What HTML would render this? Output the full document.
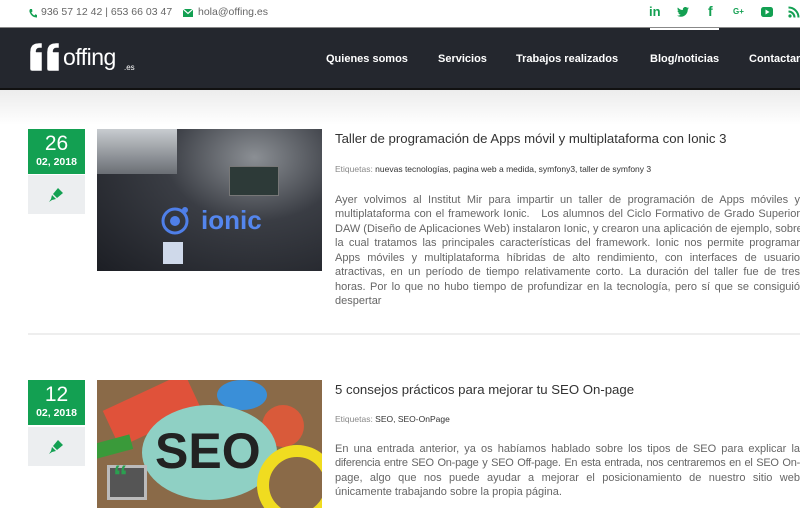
<!DOCTYPE html>
<html><head><meta charset="utf-8"><style>
*{margin:0;padding:0;box-sizing:border-box}
body{width:800px;height:508px;overflow:hidden;background:#fff;font-family:"Liberation Sans",sans-serif;position:relative}
.top{position:absolute;left:0;top:0;width:800px;height:28px;border-bottom:1px solid #888;background:#fff;font-size:10.5px;color:#666}
.nav{position:absolute;left:0;top:28px;width:800px;height:62px;background:#24272e;border-bottom:2px solid #111}
.nav a{position:absolute;top:25px;color:#fff;font-weight:bold;font-size:11px;text-decoration:none;white-space:nowrap}
.grad{position:absolute;left:0;top:90px;width:800px;height:35px;background:linear-gradient(#ececec,#fff)}
.date{position:absolute;left:28px;width:57px;height:45px;background:#13a052;color:#fff;text-align:center}
.date b{display:block;font-size:21px;font-weight:normal;line-height:24px;padding-top:3px}
.date i{display:block;font-style:normal;font-weight:bold;font-size:10.5px}
.pen{position:absolute;left:28px;width:57px;height:39px;background:#eceef0}
.pen svg{position:absolute;left:20px;top:12px}
.title{position:absolute;left:335px;font-size:13.2px;color:#333;white-space:nowrap}
.tags{position:absolute;left:335px;font-size:8.5px;color:#888;white-space:nowrap}
.tags span{color:#333}
.body{position:absolute;left:335px;width:465px;font-size:11px;line-height:14.45px;color:#666}
.body div{text-align:justify;text-align-last:justify;white-space:nowrap;height:14.45px}
.body div.l{text-align-last:left}
.img{position:absolute;left:97px;width:225px}
</style></head><body>
<div class="top">
<svg style="position:absolute;left:29px;top:9px" width="8" height="9" viewBox="0 0 8 9"><path d="M1 0 L3 0 L3.5 2.5 L2.3 3.3 Q3.5 5.8 5.5 6.5 L6.3 5.3 L8 6 L8 8.5 Q3 9 0.5 3 Q0.3 1 1 0Z" fill="#13a052"/></svg>
<span style="position:absolute;left:41px;top:6px">936 57 12 42 | 653 66 03 47</span>
<svg style="position:absolute;left:183px;top:9px" width="10" height="8"><rect width="10" height="8" fill="#13a052"/><path d="M0 0 L5 4.5 L10 0" stroke="#fff" stroke-width="1.2" fill="none"/></svg>
<span style="position:absolute;left:198px;top:6px">hola@offing.es</span>
<div style="position:absolute;left:649px;top:4px;color:#13a052;font-weight:bold;font-size:13px">in</div>
<svg style="position:absolute;left:677px;top:7px" width="12" height="10" viewBox="0 0 24 20"><path d="M24 2.4a10 10 0 0 1-2.8.8A5 5 0 0 0 23.3.4a10 10 0 0 1-3.1 1.2A4.9 4.9 0 0 0 11.8 6 14 14 0 0 1 1.7.9a4.9 4.9 0 0 0 1.5 6.6A4.9 4.9 0 0 1 1 6.9a4.9 4.9 0 0 0 3.900 4.8 5 5 0 0 1-2.2.1 4.9 4.9 0 0 0 4.6 3.4A9.9 9.9 0 0 1 0 17.3 14 14 0 0 0 7.5 19.5c9.1 0 14-7.5 14-14v-.6A10 10 0 0 0 24 2.4z" fill="#13a052"/></svg>
<div style="position:absolute;left:708px;top:3px;color:#13a052;font-weight:bold;font-size:14px">f</div>
<div style="position:absolute;left:733px;top:7px;color:#13a052;font-weight:bold;font-size:8px">G+</div>
<svg style="position:absolute;left:761px;top:7px" width="12" height="10"><rect width="12" height="10" rx="2.5" fill="#13a052"/><path d="M4.5 2.5 L8.5 5 L4.5 7.5Z" fill="#fff"/></svg>
<svg style="position:absolute;left:788px;top:6px" width="12" height="12"><circle cx="2" cy="10" r="1.6" fill="#13a052"/><path d="M0.5 5.5 A6 6 0 0 1 6.5 11.5 M0.5 1.5 A10 10 0 0 1 10.5 11.5" stroke="#13a052" stroke-width="2" fill="none"/></svg>
</div>
<div class="nav">
<svg style="position:absolute;left:28px;top:14px" width="36" height="30" viewBox="0 0 36 30"><path d="M2 10 Q2 1 11 1 L14 1 L14 6 L11 6 Q8 6 8 10 L14 10 L14 29 L4 29 Q2 29 2 27Z M19 10 Q19 1 28 1 L31 1 L31 6 L28 6 Q25 6 25 10 L31 10 L31 29 L21 29 Q19 29 19 27Z" fill="#fff" stroke="#24272e" stroke-width="0.5"/></svg>
<div style="position:absolute;left:63px;top:16px;color:#fff;font-size:23px;letter-spacing:-0.5px;font-weight:300">offing</div>
<div style="position:absolute;left:124px;top:35px;color:#fff;font-size:8px">.es</div>
<a style="left:326px">Quienes somos</a>
<a style="left:438px">Servicios</a>
<a style="left:516px">Trabajos realizados</a>
<a style="left:650px">Blog/noticias</a>
<div style="position:absolute;left:650px;top:0;width:69px;height:2px;background:#fff"></div>
<a style="left:749px">Contactar</a>
</div>
<div class="grad"></div>

<div class="date" style="top:129px"><b>26</b><i>02, 2018</i></div>
<div class="pen" style="top:175px"><svg width="16" height="16" viewBox="0 0 16 16"><path d="M10 1 L15 6 L9 11 L5 7Z M4 8 L8 12 L4 13 L1 15 L3 12Z" fill="#13a052"/></svg></div>
<div class="img" style="top:129px;height:142px;background:radial-gradient(ellipse at 70% 20%,#8b8f94 0%,#3a3d44 40%,#1c1e24 100%)">
<div style="position:absolute;left:0;top:0;width:80px;height:45px;background:linear-gradient(#c8ccd0,#6a6e74)"></div>
<div style="position:absolute;left:132px;top:37px;width:50px;height:30px;background:#2d3a38;border:1px solid #777"></div>
<svg style="position:absolute;left:63px;top:75px" width="32" height="32"><circle cx="15" cy="17" r="12" stroke="#4f7fe8" stroke-width="3" fill="none"/><circle cx="15" cy="17" r="5" fill="#4f7fe8"/><circle cx="25" cy="6" r="3" fill="#4f7fe8"/></svg>
<div style="position:absolute;left:104px;top:76px;color:#5486ee;font-size:26px;font-weight:bold">ionic</div>
<div style="position:absolute;left:66px;top:113px;width:20px;height:22px;background:#cfd9ea"></div>
</div>
<div class="title" style="top:131px">Taller de programación de Apps móvil y multiplataforma con Ionic 3</div>
<div class="tags" style="top:164px">Etiquetas: <span>nuevas tecnologías, pagina web a medida, symfony3, taller de symfony 3</span></div>
<div class="body" style="top:193px">
<div>Ayer volvimos al Institut Mir para impartir un taller de programación de Apps móviles y</div>
<div>multiplataforma con el framework Ionic. &nbsp; Los alumnos del Ciclo Formativo de Grado Superior</div>
<div>DAW (Diseño de Aplicaciones Web) instalaron Ionic, y crearon una aplicación de ejemplo, sobre</div>
<div>la cual tratamos las principales características del framework. Ionic nos permite programar</div>
<div>Apps móviles y multiplataforma híbridas de alto rendimiento, con interfaces de usuario</div>
<div>atractivas, en un período de tiempo relativamente corto. La duración del taller fue de tres</div>
<div>horas. Por lo que no hubo tiempo de profundizar en la tecnología, pero sí que se consiguió</div>
<div class="l">despertar</div>
</div>

<div style="position:absolute;left:28px;top:333px;width:772px;height:2px;background:#eee"></div>

<div class="date" style="top:380px"><b>12</b><i>02, 2018</i></div>
<div class="pen" style="top:427px"><svg width="16" height="16" viewBox="0 0 16 16"><path d="M10 1 L15 6 L9 11 L5 7Z M4 8 L8 12 L4 13 L1 15 L3 12Z" fill="#13a052"/></svg></div>
<div class="img" style="top:380px;height:128px;background:#8a6a48;overflow:hidden">
<div style="position:absolute;left:10px;top:10px;width:90px;height:40px;background:#e0523a;transform:rotate(-25deg)"></div>
<div style="position:absolute;left:120px;top:0;width:50px;height:30px;border-radius:50%;background:#3a8fd8"></div>
<div style="position:absolute;left:165px;top:25px;width:42px;height:42px;border-radius:50%;background:#d95a3a"></div>
<div style="position:absolute;left:45px;top:25px;width:135px;height:95px;border-radius:50%;background:#8fd0c4"></div>
<div style="position:absolute;left:58px;top:42px;font-size:50px;font-weight:bold;color:#222">SEO</div>
<div style="position:absolute;left:160px;top:65px;width:80px;height:80px;border-radius:50%;border:12px solid #f0dc20"></div>
<div style="position:absolute;left:10px;top:85px;width:40px;height:35px;background:#555;border:3px solid #bbb"></div>
<div style="position:absolute;left:16px;top:80px;font-size:30px;font-weight:bold;color:#2aa050">“</div>
<div style="position:absolute;left:-10px;top:60px;width:45px;height:15px;background:#3a9a3a;transform:rotate(-15deg)"></div>
</div>
<div class="title" style="top:382px">5 consejos prácticos para mejorar tu SEO On-page</div>
<div class="tags" style="top:414px">Etiquetas: <span>SEO, SEO-OnPage</span></div>
<div class="body" style="top:442px">
<div>En una entrada anterior, ya os habíamos hablado sobre los tipos de SEO para explicar la</div>
<div style="letter-spacing:-0.25px">diferencia entre SEO On-page y SEO Off-page. En esta entrada, nos centraremos en el SEO On-</div>
<div>page, algo que nos puede ayudar a mejorar el posicionamiento de nuestro sitio web</div>
<div class="l">únicamente trabajando sobre la propia página.</div>
</div>
</body></html>
